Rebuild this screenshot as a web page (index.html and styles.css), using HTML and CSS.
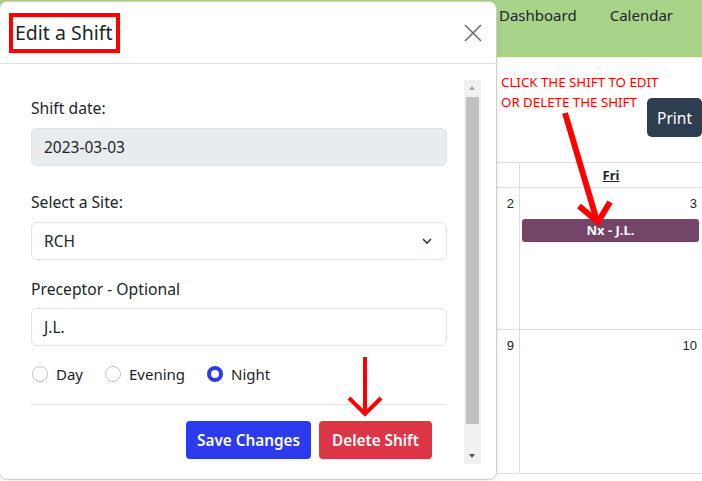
FILE: index.html
```html
<!DOCTYPE html>
<html lang="en">
<head>
<meta charset="utf-8">
<title>Edit a Shift</title>
<link rel="stylesheet" href="styles.css">
</head>
<body>
<div class="app">
  <nav class="topnav">
    <a class="navlink" href="#">Dashboard</a>
    <a class="navlink" href="#">Calendar</a>
  </nav>
  <main class="main">
    <div class="toolbar">
      <p class="hint">CLICK THE SHIFT TO EDIT<br><button class="print-btn" type="button">Print</button>OR DELETE THE SHIFT</p>
    </div>
    <table class="cal">
      <thead>
        <tr><th class="cal-head"></th><th class="cal-head"><span class="day-name">Fri</span></th></tr>
      </thead>
      <tbody>
        <tr class="week">
          <td class="cal-cell"><div class="date-num">2</div></td>
          <td class="cal-cell"><div class="date-num">3</div><div class="event">Nx - J.L.</div></td>
        </tr>
        <tr class="week week-2">
          <td class="cal-cell"><div class="date-num">9</div></td>
          <td class="cal-cell"><div class="date-num">10</div></td>
        </tr>
      </tbody>
    </table>
  </main>
</div>

<div class="modal">
  <div class="modal-header">
    <h5 class="modal-title">Edit a Shift</h5>
    <button class="close-btn" type="button" aria-label="Close">
      <svg width="18" height="18" viewBox="0 0 18 18"><path d="M1 1 L17 17 M17 1 L1 17" stroke="#6e6e6e" stroke-width="1.6" fill="none"/></svg>
    </button>
  </div>
  <div class="modal-body">
    <div class="scroll-area">
      <form class="form">
        <label class="label">Shift date:</label>
        <div class="input input-disabled">2023-03-03</div>
        <label class="label label-site">Select a Site:</label>
        <div class="input select">
          <span>RCH</span>
          <svg width="12" height="8" viewBox="0 0 12 8"><path d="M2 2 L6 6 L10 2" stroke="#343a40" stroke-width="1.6" fill="none"/></svg>
        </div>
        <label class="label label-prec">Preceptor - Optional</label>
        <div class="input">J.L.</div>
        <div class="radios">
          <span class="radio-item"><span class="radio"></span>Day</span>
          <span class="radio-item"><span class="radio"></span>Evening</span>
          <span class="radio-item"><span class="radio radio-on"></span>Night</span>
        </div>
        <hr class="divider">
        <div class="actions">
          <button class="btn btn-save" type="button">Save Changes</button>
          <button class="btn btn-delete" type="button">Delete Shift</button>
        </div>
      </form>
      <div class="scrollbar">
        <div class="sb-arrow sb-up"></div>
        <div class="sb-thumb"></div>
        <div class="sb-space"></div>
        <div class="sb-arrow sb-down"></div>
      </div>
    </div>
  </div>
</div>

<svg class="annot" width="702" height="481" viewBox="0 0 702 481">
  <g stroke="#ff0000" fill="none" stroke-linecap="butt">
    <path d="M565 113 L597 221" stroke-width="6"/>
    <path d="M579 206 L598 222 L610 202" stroke-width="6"/>
    <path d="M365 357 L365 414" stroke-width="4"/>
    <path d="M349 398 L365 414 L381 398" stroke-width="4"/>
  </g>
</svg>
</body>
</html>
```

FILE: styles.css
```css
* { box-sizing: border-box; }
html, body { margin: 0; padding: 0; }
body {
  width: 702px;
  height: 481px;
  overflow: hidden;
  position: relative;
  background: #fff;
  font-family: "Noto Sans", "Open Sans", sans-serif;
  color: #212529;
}

/* underlying page */
.topnav {
  height: 57px;
  background: #aad38a;
  display: flex;
  align-items: flex-start;
  gap: 33px;
  padding: 3px 0 0 499px;
  box-shadow: 0 1px 2px rgba(0,0,0,0.06);
}
.navlink {
  color: #212529;
  text-decoration: none;
  font-size: 15px;
  line-height: 24px;
}
.main { padding-top: 15px; }
.toolbar {
  display: flow-root;
  padding-left: 501px;
  margin-bottom: 25px;
}
.hint {
  margin: 0;
  color: #ff0000;
  font-size: 13.3px;
  line-height: 20px;
  white-space: nowrap;
}
.print-btn {
  float: right;
  margin-top: 6px;
  height: 39px;
  padding: 0 10px;
  border: 0;
  border-radius: 5px;
  background: #2c3e50;
  color: #fff;
  font-family: inherit;
  font-size: 15.5px;
}
.cal {
  width: 100%;
  border-collapse: collapse;
  table-layout: fixed;
}
.cal-head:first-child, .cal-cell:first-child { width: 519px; }
.cal-head {
  height: 25px;
  border: 1px solid #dddddd;
  border-right: 0;
  font-size: 13px;
  font-weight: 700;
  text-align: center;
  padding: 0;
  vertical-align: middle;
}
.day-name { text-decoration: underline; color: #212529; }
.cal-cell {
  height: 142px;
  border: 1px solid #dddddd;
  border-right: 0;
  vertical-align: top;
  padding: 0;
}
.week-2 .cal-cell { height: 144px; }
.date-num {
  font-family: "Liberation Sans", Arial, sans-serif;
  font-size: 13px;
  line-height: 15px;
  text-align: right;
  padding: 8px 5px 0 0;
}
.event {
  margin: 8px 3px 0 2px;
  height: 23px;
  background: #744469;
  border-radius: 3px;
  color: #fff;
  font-size: 13px;
  font-weight: 700;
  line-height: 23px;
  text-align: center;
}

/* modal */
.modal {
  position: absolute;
  left: -1px;
  top: 1px;
  width: 498px;
  height: 479px;
  background: #fff;
  border: 1px solid #cfcfcf;
  border-radius: 8px;
  box-shadow: 0 2px 6px rgba(0,0,0,0.08);
  display: flex;
  flex-direction: column;
}
.modal-header {
  height: 62px;
  flex: none;
  display: flex;
  align-items: center;
  justify-content: space-between;
  padding: 0 14px 0 9px;
  border-bottom: 1px solid #dee2e6;
}
.modal-title {
  margin: 0;
  border: 4px solid #ff0000;
  height: 40px;
  padding: 0 3px 0 2px;
  font-size: 19.5px;
  font-weight: 400;
  line-height: 32px;
}
.close-btn {
  border: 0;
  background: none;
  padding: 0;
  width: 18px;
  height: 18px;
  display: flex;
}
.modal-body {
  flex: 1;
  padding: 16px 15px 15px 16px;
  min-height: 0;
}
.scroll-area {
  height: 100%;
  display: flex;
}
.form {
  flex: 1;
  padding: 16px 17px 0 15px;
}
.label {
  display: block;
  font-size: 15.7px;
  line-height: 24px;
  margin-bottom: 8px;
}
.label-site { margin-top: 24px; }
.label-prec { margin-top: 17px; margin-bottom: 7px; }
.input {
  height: 38px;
  border: 1px solid #dee2e6;
  border-radius: 6px;
  padding: 0 12px;
  font-size: 15.5px;
  line-height: 36px;
  background: #fff;
}
.input-disabled { background: #e9ecef; }
.select {
  display: flex;
  align-items: center;
  justify-content: space-between;
  padding-right: 13px;
}
.radios {
  display: flex;
  align-items: center;
  margin-top: 16px;
  height: 24px;
  gap: 21px;
  font-size: 15px;
}
.radio-item {
  display: inline-flex;
  align-items: center;
  gap: 8px;
}
.radio {
  width: 16px;
  height: 16px;
  border-radius: 50%;
  border: 1px solid #bfc3c7;
  background: #fff;
  margin-left: 1px;
}
.radio-on {
  border: 4px solid #2b3aec;
  background: #fff;
}
.divider {
  margin: 18px 0 0;
  border: 0;
  border-top: 1px solid #dee2e6;
}
.actions {
  display: flex;
  justify-content: flex-end;
  gap: 8px;
  margin-top: 16px;
  padding-right: 15px;
}
.btn {
  height: 38px;
  border: 0;
  border-radius: 4px;
  padding: 0 12px;
  color: #fff;
  font-family: inherit;
  font-size: 15.3px;
  font-weight: 600;
}
.btn-save { background: #2b3aec; padding: 0 11px; }
.btn-delete { background: #dc3545; padding: 0 13px; }

.scrollbar {
  width: 17px;
  flex: none;
  background: #f1f1f1;
  display: flex;
  flex-direction: column;
  align-items: center;
}
.sb-arrow {
  height: 17px;
  width: 17px;
  position: relative;
  flex: none;
}
.sb-arrow::after {
  content: "";
  position: absolute;
  left: 5px;
  top: 6px;
  border-left: 3.5px solid transparent;
  border-right: 3.5px solid transparent;
}
.sb-up::after { border-bottom: 4px solid #a3a3a3; }
.sb-down::after { border-top: 4px solid #505050; top: 7px; }
.sb-thumb {
  width: 13px;
  height: 327px;
  background: #c1c1c1;
  flex: none;
}
.sb-space { flex: 1; }

.annot {
  position: absolute;
  left: 0;
  top: 0;
  pointer-events: none;
}
```
